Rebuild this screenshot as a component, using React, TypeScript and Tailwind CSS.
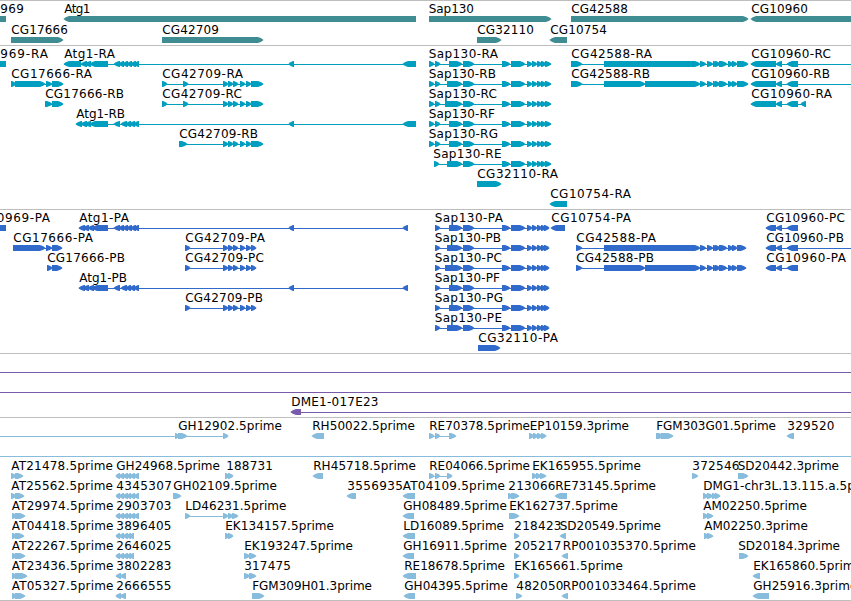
import React from "react";

type Exon = [number, number];

interface Feature {
  label?: string;
  /** left and right ink edges of the label */
  at?: [number, number];
  /** label baseline */
  y: number;
  dir?: "L" | "R" | "none";
  exons: Exon[];
  /** intron line extent when it goes beyond the exons */
  line?: [number, number];
}

interface Track {
  name: string;
  color: string;
  top: number;
  height: number;
  features: Feature[];
}

const f = (
  label: string,
  x: number,
  right: number,
  y: number,
  dir: "L" | "R" | "none",
  exons: Exon[],
  line?: [number, number],
): Feature => ({ label, at: [x, right], y, dir, exons, line });

const EDGE = 860;

const atgCluster: Exon[] = [[119, 124], [123, 128], [127, 132], [131, 136], [134, 139]];
const atgClusterB: Exon[] = [[121, 127], [126, 131], [130, 135], [134, 139]];
const cg42709: Exon[] = [[223, 228], [228, 233], [233, 238], [240, 245], [246, 251]];
const sapMid: Exon[] = [[463, 474], [502, 510], [511, 525], [527, 532], [532, 537], [537, 542], [541, 546]];
const cg42588: Exon[] = [[700, 706], [707, 713], [713, 717], [715, 720], [719, 727], [728, 733], [732, 737]];
const estCluster: Exon[] = [[116, 120], [119, 124], [123, 128], [127, 131], [130, 135], [134, 139]];
const estShort: Exon[] = [[116, 120], [119, 124], [123, 128], [127, 131], [129, 134]];
const sapR = (first: number): Exon[] => [[429, 434], [435, 440], [first, 462], ...sapMid, [545, 551]];
const sapP = (first: number): Exon[] => [[435, 440], [first, 462], ...sapMid, [544, 549]];

const tracks: Track[] = [
  {
    name: "genes",
    color: "#408c93",
    top: 0,
    height: 45,
    features: [
      f("969", 0.5, 23.5, 13, "none", [[-10, 6]]),
      f("Atg1", 64.5, 90, 13, "L", [[64, 416]]),
      f("Sap130", 429, 473.5, 13, "R", [[429, 551]]),
      f("CG42588", 571.5, 627.5, 13, "R", [[571, 748]]),
      f("CG10960", 751.5, 807.5, 13, "L", [[751, EDGE]]),
      f("CG17666", 11.5, 67.5, 34, "R", [[11, 63]]),
      f("CG42709", 162.5, 218.5, 34, "R", [[162, 263]]),
      f("CG32110", 477.5, 533.5, 34, "R", [[477, 501]]),
      f("CG10754", 550.5, 606.5, 34, "L", [[550, 567]]),
    ],
  },
  {
    name: "transcripts",
    color: "#009ebf",
    top: 45,
    height: 164,
    features: [
      f("969-RA", 0.5, 47.5, 58, "none", [[-10, 6]]),
      f("Atg1-RA", 64.5, 114.5, 58, "L", [[64, 81], [81, 87], [85, 91], [90, 108], [114, 120], ...atgCluster, [289, 294], [403, 416]]),
      f("Sap130-RA", 429, 497.5, 58, "R", sapR(449)),
      f("CG42588-RA", 571.5, 651.5, 58, "R", [[571, 582], [604, 700], ...cg42588, [737, 748]]),
      f("CG10960-RC", 751.5, 830.5, 58, "L", [[751, 776], [776, 782], [787, 798]], [751, EDGE]),
      f("CG17666-RA", 11.5, 91.5, 78, "R", [[11, 16], [15, 45], [46, 52], [52, 63]]),
      f("CG42709-RA", 162.5, 242.5, 78, "R", [[162, 167], [183, 188], ...cg42709, [251, 263]]),
      f("Sap130-RB", 429, 495.5, 78, "R", sapR(447)),
      f("CG42588-RB", 571.5, 649.5, 78, "R", [[571, 582], [604, 645], [645, 700], ...cg42588, [737, 748]]),
      f("CG10960-RB", 751.5, 829.5, 78, "L", [[751, 776], [776, 782], [787, 798]], [751, EDGE]),
      f("CG17666-RB", 45.5, 123.5, 98, "R", [[45, 52], [52, 63]]),
      f("CG42709-RC", 162.5, 241.5, 98, "R", [[162, 167], [183, 188], ...cg42709, [251, 263]]),
      f("Sap130-RC", 429, 496.5, 98, "R", sapR(445)),
      f("CG10960-RA", 751.5, 831.5, 98, "L", [[751, 776], [776, 782], [787, 798], [801, 806]]),
      f("Atg1-RB", 76.5, 124.5, 118, "L", [[76, 82], [81, 87], [85, 91], [90, 108], [114, 120], ...atgClusterB, [289, 294], [403, 416]]),
      f("Sap130-RF", 429, 494.5, 118, "R", sapR(449)),
      f("CG42709-RB", 179.5, 257.5, 138, "R", [[179, 187], ...cg42709, [251, 263]]),
      f("Sap130-RG", 429, 497.5, 138, "R", sapR(449)),
      f("Sap130-RE", 433.5, 501, 158, "R", [[434, 439], [447, 462], ...sapMid, [545, 551]]),
      f("CG32110-RA", 477.5, 557.5, 178, "R", [[477, 501]]),
      f("CG10754-RA", 550.5, 630.5, 198, "L", [[550, 567]]),
    ],
  },
  {
    name: "proteins",
    color: "#306acb",
    top: 209,
    height: 144,
    features: [
      f("0969-PA", -3, 49.5, 222, "none", [[-10, 6]]),
      f("Atg1-PA", 79.5, 128.5, 222, "L", [[79, 85], [83, 89], [88, 94], [92, 108], [114, 120], ...atgCluster, [289, 294], [403, 408]]),
      f("Sap130-PA", 435, 502.5, 222, "R", sapP(449)),
      f("CG10754-PA", 551.5, 630.5, 222, "L", [[551, 565]]),
      f("CG10960-PC", 766.5, 844.5, 222, "L", [[766, 776], [776, 782], [787, 798]]),
      f("CG17666-PA", 13.5, 92.5, 242, "R", [[13, 45], [46, 52], [52, 62]]),
      f("CG42709-PA", 185.5, 264.5, 242, "R", [[185, 190], ...cg42709, [251, 256]]),
      f("Sap130-PB", 435, 500.5, 242, "R", sapP(447)),
      f("CG42588-PA", 576.5, 655.5, 242, "R", [[576, 582], [604, 700], ...cg42588, [737, 746]]),
      f("CG10960-PB", 766.5, 843.5, 242, "L", [[766, 776], [776, 782], [787, 798]], [766, EDGE]),
      f("CG17666-PB", 47.5, 124.5, 262, "R", [[47, 52], [52, 62]]),
      f("CG42709-PC", 185.5, 263.5, 262, "R", [[185, 190], ...cg42709, [251, 256]]),
      f("Sap130-PC", 435, 501.5, 262, "R", sapP(445)),
      f("CG42588-PB", 576.5, 653.5, 262, "R", [[576, 582], [604, 645], [645, 700], ...cg42588, [737, 746]]),
      f("CG10960-PA", 766.5, 845.5, 262, "L", [[766, 776], [776, 782], [787, 798]]),
      f("Atg1-PB", 79.5, 126.5, 282, "L", [[79, 85], [83, 89], [88, 94], [92, 108], [114, 120], ...atgClusterB, [289, 294], [403, 408]]),
      f("Sap130-PF", 435, 499.5, 282, "R", sapP(449)),
      f("CG42709-PB", 185.5, 262.5, 302, "R", [[185, 190], ...cg42709, [251, 256]]),
      f("Sap130-PG", 435, 502.5, 302, "R", sapP(449)),
      f("Sap130-PE", 435, 501.5, 322, "R", sapP(447)),
      f("CG32110-PA", 478.5, 557.5, 342, "R", [[478, 500]]),
    ],
  },
  {
    name: "bacs",
    color: "#7a5aaa",
    top: 353,
    height: 64,
    features: [
      { y: 366, exons: [], line: [0, EDGE] },
      { y: 386, exons: [], line: [0, EDGE] },
      f("DME1-017E23", 291.5, 378, 406, "L", [[291, 301]], [291, EDGE]),
    ],
  },
  {
    name: "ests",
    color: "#87bcdd",
    top: 417,
    height: 183,
    features: [
      f("GH12902.5prime", 178.5, 281.5, 430, "R", [[175, 179], [178, 187], [223, 228]], [0, 228]),
      f("RH50022.5prime", 312.5, 414.5, 430, "L", [[312, 324]]),
      f("RE70378.5prime", 429.5, 529.5, 430, "R", [[429, 434], [435, 440], [449, 456]]),
      f("EP10159.3prime", 530, 628.5, 430, "R", [[529, 534], [533, 538], [537, 542], [541, 546]]),
      f("FGM303G01.5prime", 656.5, 775.5, 430, "R", [[656, 664], [661, 673]]),
      f("329520", 787.5, 834, 430, "L", [[787, 794]]),
      { y: 450, exons: [], line: [0, EDGE] },
      f("AT21478.5prime", 11.5, 112.5, 470, "R", [[11, 16], [15, 23]]),
      f("GH24968.5prime", 116.5, 219.5, 470, "L", estCluster),
      f("188731", 226.5, 272.5, 470, "R", [[225, 230], [228, 233]]),
      f("RH45718.5prime", 313.5, 415.5, 470, "L", [[313, 323]]),
      f("RE04066.5prime", 429.5, 529.5, 470, "R", [[429, 434], [435, 440], [447, 452]]),
      f("EK165955.5prime", 532.5, 640.5, 470, "R", [[532, 537], [536, 541], [540, 546]]),
      f("372546", 692.5, 739, 470, "R", [[692, 698]]),
      f("SD20442.3prime", 738, 838.5, 470, "R", [[738, 748]]),
      f("AT25562.5prime", 11.5, 112.5, 490, "R", [[11, 16], [15, 24]]),
      f("4345307", 116.5, 171.5, 490, "L", estCluster),
      f("GH02109.5prime", 173.5, 276.5, 490, "R", [[173, 181]]),
      f("3556935", 347.5, 402.5, 490, "L", [[347, 356]]),
      f("AT04109.5prime", 403, 504.5, 490, "L", [[403, 415]]),
      f("213066", 508.5, 555, 490, "R", [[508, 513], [511, 519]]),
      f("RE73145.5prime", 555.5, 655.5, 490, "L", [[555, 567]]),
      f("DMG1-chr3L.13.115.a.5prime", 703.5, 882, 490, "R", [[703, 708], [707, 713], [712, 717], [715, 720]]),
      f("AT29974.5prime", 12, 113, 510, "R", [[12, 17], [15, 25]]),
      f("2903703", 116.5, 171, 510, "L", estCluster),
      f("LD46231.5prime", 185.5, 286, 510, "R", [[185, 190], [223, 228], [228, 233], [232, 238]]),
      f("GH08489.5prime", 403.5, 506.5, 510, "L", [[403, 414]]),
      f("EK162737.5prime", 509.5, 617.5, 510, "R", [[509, 519]]),
      f("AM02250.5prime", 703.5, 806.5, 510, "R", [[703, 708], [707, 713]]),
      f("AT04418.5prime", 12, 113, 530, "R", [[12, 17], [15, 24]]),
      f("3896405", 116.5, 171, 530, "L", estShort),
      f("EK134157.5prime", 225.5, 333.5, 530, "R", [[225, 230], [228, 233]]),
      f("LD16089.5prime", 403.5, 503.5, 530, "L", [[403, 415]]),
      f("218423", 514.5, 561, 530, "R", [[514, 519]]),
      f("SD20549.5prime", 560, 660.5, 530, "L", [[560, 566]]),
      f("AM02250.3prime", 704.5, 807.5, 530, "R", [[704, 709], [707, 713]]),
      f("AT22267.5prime", 12, 113, 550, "R", [[12, 17], [15, 25]]),
      f("2646025", 116.5, 171, 550, "L", estShort),
      f("EK193247.5prime", 244.5, 352.5, 550, "R", [[244, 250], [249, 256]]),
      f("GH16911.5prime", 403.5, 506.5, 550, "L", [[403, 414]]),
      f("205217", 514.5, 561, 550, "R", [[514, 519]]),
      f("RP001035370.5prime", 563, 695.5, 550, "L", [[562, 568]]),
      f("SD20184.3prime", 738.5, 839.5, 550, "R", [[739, 748]]),
      f("AT23436.5prime", 12, 113, 570, "R", [[12, 17], [15, 27]]),
      f("3802283", 116.5, 171, 570, "L", [[116, 121], [120, 126]]),
      f("317475", 244.5, 290.5, 570, "R", [[244, 250], [249, 256]]),
      f("RE18678.5prime", 404.5, 504.5, 570, "L", [[403, 416]]),
      f("EK165661.5prime", 514.5, 622.5, 570, "R", [[514, 519]]),
      f("EK165860.5prime", 753.5, 861.5, 570, "L", [[753, 760]]),
      f("AT05327.5prime", 12, 113, 590, "R", [[12, 17], [15, 25]]),
      f("2666555", 116.5, 171, 590, "L", [[116, 121], [120, 126]]),
      f("FGM309H01.3prime", 252.5, 371.5, 590, "R", [[252, 264]]),
      f("GH04395.5prime", 404.5, 507.5, 590, "L", [[404, 415]]),
      f("482050", 516.5, 563, 590, "R", [[516, 522]]),
      f("RP001033464.5prime", 563, 695.5, 590, "L", [[562, 568]]),
      f("GH25916.3prime", 753.5, 857, 590, "L", [[753, 769]]),
    ],
  },
];

/** Exon block with a slightly rounded arrow tip on the strand side. */
function exonPoints([a, b]: Exon, top: number, dir: Feature["dir"]) {
  const bottom = top + 6;
  const tip = Math.min(5, b - a - 1);
  const wing = tip * 0.35;
  if (dir === "L") {
    return `${b},${top} ${a + tip},${top} ${a + wing},${top + 1.2} ${a - 0.6},${top + 3} ${a + wing},${top + 4.8} ${a + tip},${bottom} ${b},${bottom}`;
  }
  if (dir === "R") {
    return `${a},${top} ${b - tip},${top} ${b - wing},${top + 1.2} ${b + 0.6},${top + 3} ${b - wing},${top + 4.8} ${b - tip},${bottom} ${a},${bottom}`;
  }
  return `${a},${top} ${b},${top} ${b},${bottom} ${a},${bottom}`;
}

function FeatureGlyph({ feature }: { feature: Feature }) {
  const { label, at, y, dir, exons, line } = feature;
  const span = line ?? (exons.length > 1 ? [exons[0][0], exons[exons.length - 1][1]] : null);
  return (
    <g>
      {span && <rect x={span[0]} y={y + 6} width={span[1] - span[0]} height={1} />}
      {exons.map((e, i) => (
        <polygon key={i} points={exonPoints(e, y + 3, dir)} />
      ))}
      {label && at && (
        <text x={at[0] - 0.3} y={y} textLength={at[1] - at[0] + 0.8} lengthAdjust="spacing" className="fill-black">
          {label}
        </text>
      )}
    </g>
  );
}

function TrackPanel({ track }: { track: Track }) {
  return (
    <section aria-label={track.name} className="shrink-0 border-t border-[#bebebe]">
      <svg
        className="block w-full overflow-hidden"
        width={851}
        height={track.height - 1}
        viewBox={`0 ${track.top + 1} 851 ${track.height - 1}`}
        fill={track.color}
      >
        {track.features.map((feature, i) => (
          <FeatureGlyph key={i} feature={feature} />
        ))}
      </svg>
    </section>
  );
}

export default function App() {
  return (
    <main className="flex h-[601px] w-[851px] flex-col overflow-hidden border-b border-[#bebebe] bg-white font-['DejaVu_Sans',sans-serif] text-[12px]">
      {tracks.map((track) => (
        <TrackPanel key={track.name} track={track} />
      ))}
    </main>
  );
}
